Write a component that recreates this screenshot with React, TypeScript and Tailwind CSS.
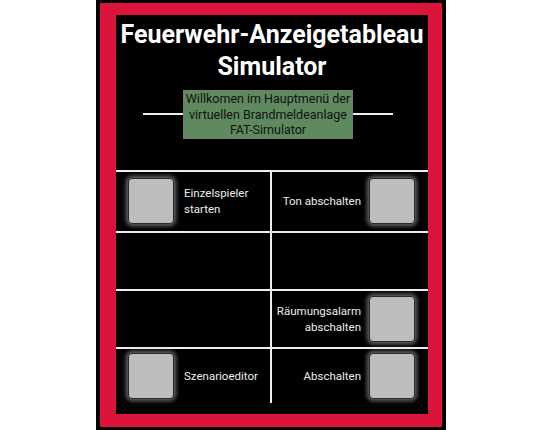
import React from "react";

// ============================================
// MENU ENTRIES
// ============================================

interface Cell {
  label?: string[];
  side: "left" | "right";
}

const rows: { h: string; cells: [Cell, Cell] }[] = [
  {
    h: "h-[59px]",
    cells: [
      { label: ["Einzelspieler", "starten"], side: "left" },
      { label: ["Ton abschalten"], side: "right" },
    ],
  },
  { h: "h-[58px]", cells: [{ side: "left" }, { side: "right" }] },
  {
    h: "h-[58px]",
    cells: [{ side: "left" }, { label: ["Räumungsalarm", "abschalten"], side: "right" }],
  },
  {
    h: "h-[56px]",
    cells: [
      { label: ["Szenarioeditor"], side: "left" },
      { label: ["Abschalten"], side: "right" },
    ],
  },
];

function PanelButton() {
  return (
    <button className="w-[46px] h-[46px] shrink-0 rounded-[4px] bg-[#bdbdbd] border border-[#2a2a2a] shadow-[0_0_4px_2px_rgba(190,190,190,0.55)]" />
  );
}

function MenuCell({ cell, divider }: { cell: Cell; divider: boolean }) {
  if (!cell.label) {
    return <div className={divider ? "border-r-2 border-[#eeeeee]" : ""} />;
  }
  const text = (
    <div
      className={
        "text-[11.5px] leading-[16px] text-[#eeeeee] whitespace-nowrap " +
        (cell.side === "right" ? "text-right" : "text-left")
      }
    >
      {cell.label.map((l) => (
        <div key={l}>{l}</div>
      ))}
    </div>
  );
  return (
    <div
      className={
        "flex items-center " +
        (cell.side === "left" ? "pl-[12px] gap-[10px] " : "justify-end pr-[13px] gap-[8px] ") +
        (divider ? "border-r-2 border-[#eeeeee]" : "")
      }
    >
      {cell.side === "left" ? (
        <>
          <PanelButton />
          {text}
        </>
      ) : (
        <>
          {text}
          <PanelButton />
        </>
      )}
    </div>
  );
}

export default function App() {
  return (
    <div className="flex justify-center bg-white" style={{ fontFamily: "Roboto, 'Noto Sans', sans-serif" }}>
      <div className="w-[350px] h-[430px] bg-black pt-[3px] pb-[3px] pl-[4px] pr-[4px]">
        <div className="h-full bg-[#dc143c] pt-[12px] pb-[13px] pl-[16px] pr-[14px]">
          <div className="h-full bg-black flex flex-col">
            {/* Title */}
            <h1 className="pt-[4px] text-center text-white font-bold text-[25px] leading-[32px]">
              Feuerwehr-Anzeigetableau
              <br />
              Simulator
            </h1>

            {/* Welcome */}
            <div className="mt-[7px] flex items-center justify-center pr-[8px]">
              <div className="w-[40px] h-[2px] bg-[#eeeeee]" />
              <div className="bg-[#5f8a5f] border border-[#7a7a7a] text-center text-[12.5px] leading-[15.5px] text-[#111111] whitespace-nowrap px-[2px]">
                Willkomen im Hauptmenü der
                <br />
                virtuellen Brandmeldeanlage
                <br />
                FAT-Simulator
              </div>
              <div className="w-[40px] h-[2px] bg-[#eeeeee]" />
            </div>

            {/* Menu grid */}
            <div className="mt-[31px] border-t-2 border-[#eeeeee]">
              {rows.map((row, i) => (
                <div
                  key={i}
                  className={
                    "grid grid-cols-2 " + row.h + (i > 0 ? " border-t-2 border-[#eeeeee]" : "")
                  }
                >
                  <MenuCell cell={row.cells[0]} divider />
                  <MenuCell cell={row.cells[1]} divider={false} />
                </div>
              ))}
            </div>
          </div>
        </div>
      </div>
    </div>
  );
}
